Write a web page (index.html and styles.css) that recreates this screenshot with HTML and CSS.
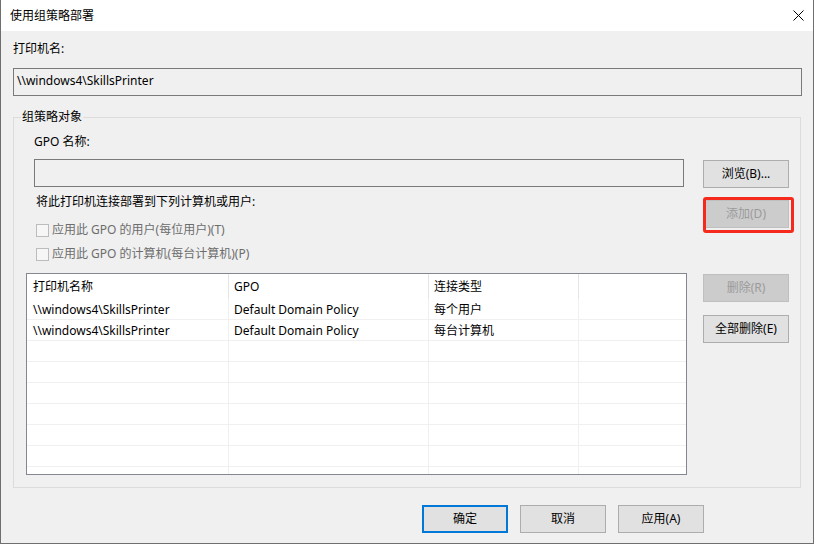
FILE: index.html
```html
<!DOCTYPE html>
<html lang="zh-CN">
<head>
<meta charset="utf-8">
<title>使用组策略部署</title>
<link rel="stylesheet" href="styles.css">
</head>
<body>
<div class="window">
  <div class="titlebar">
    <span class="title">使用组策略部署</span>
    <svg class="close" width="11" height="11" viewBox="0 0 11 11"><path d="M0.5 0.5 L10.5 10.5 M10.5 0.5 L0.5 10.5" stroke="#000" stroke-width="1" fill="none"/></svg>
  </div>
  <div class="content">
    <div class="label">打印机名:</div>
    <div class="textbox printer">\\windows4\SkillsPrinter</div>

    <div class="group">
      <span class="group-title">组策略对象</span>
      <div class="group-top">
        <div class="left">
          <div class="label">GPO 名称:</div>
          <div class="textbox gpo"></div>
          <div class="hint">将此打印机连接部署到下列计算机或用户:</div>
          <div class="check first"><span class="box"></span>应用此 GPO 的用户(每位用户)(T)</div>
          <div class="check"><span class="box"></span>应用此 GPO 的计算机(每台计算机)(P)</div>
        </div>
        <div class="side side-top">
          <div class="btn">浏览(B)...</div>
          <div class="hl-wrap">
            <div class="btn disabled">添加(D)</div>
            <span class="highlight"></span>
          </div>
        </div>
      </div>
      <div class="group-bottom">
        <div class="list">
          <div class="row head">
            <div class="cell c1">打印机名称</div>
            <div class="cell c2">GPO</div>
            <div class="cell c3">连接类型</div>
            <div class="cell c4"></div>
          </div>
          <div class="row">
            <div class="cell c1">\\windows4\SkillsPrinter</div>
            <div class="cell c2">Default Domain Policy</div>
            <div class="cell c3">每个用户</div>
            <div class="cell c4"></div>
          </div>
          <div class="row">
            <div class="cell c1">\\windows4\SkillsPrinter</div>
            <div class="cell c2">Default Domain Policy</div>
            <div class="cell c3">每台计算机</div>
            <div class="cell c4"></div>
          </div>
          <div class="row"><div class="cell c1"></div><div class="cell c2"></div><div class="cell c3"></div><div class="cell c4"></div></div>
          <div class="row"><div class="cell c1"></div><div class="cell c2"></div><div class="cell c3"></div><div class="cell c4"></div></div>
          <div class="row"><div class="cell c1"></div><div class="cell c2"></div><div class="cell c3"></div><div class="cell c4"></div></div>
          <div class="row"><div class="cell c1"></div><div class="cell c2"></div><div class="cell c3"></div><div class="cell c4"></div></div>
          <div class="row"><div class="cell c1"></div><div class="cell c2"></div><div class="cell c3"></div><div class="cell c4"></div></div>
          <div class="row"><div class="cell c1"></div><div class="cell c2"></div><div class="cell c3"></div><div class="cell c4"></div></div>
          <div class="row"><div class="cell c1"></div><div class="cell c2"></div><div class="cell c3"></div><div class="cell c4"></div></div>
        </div>
        <div class="side side-bottom">
          <div class="btn disabled">删除(R)</div>
          <div class="btn del-all">全部删除(E)</div>
        </div>
      </div>
    </div>

    <div class="footer">
      <div class="btn primary">确定</div>
      <div class="btn">取消</div>
      <div class="btn">应用(A)</div>
    </div>
  </div>
</div>
</body>
</html>
```

FILE: styles.css
```css
* { box-sizing: border-box; }

html, body {
  margin: 0;
  padding: 0;
  background: #ffffff;
}

body {
  font-family: "Noto Sans", "Noto Sans CJK SC", sans-serif;
  font-size: 12px;
  color: #000;
}

.window {
  width: 814px;
  height: 544px;
  border: 1px solid #6f6f6f;
  border-top: none;
  background: #f0f0f0;
  display: flex;
  flex-direction: column;
}

.titlebar {
  height: 31px;
  flex: 0 0 31px;
  background: #ffffff;
  display: flex;
  align-items: center;
  justify-content: space-between;
  padding: 0 9px 0 9px;
}

.title {
  line-height: 18px;
}

.close {
  display: block;
  margin-top: -1px;
}

.content {
  padding: 9px 11px 0 12px;
}

.label {
  line-height: 18px;
  height: 18px;
}

.textbox {
  height: 28px;
  border: 1px solid #7a7a7a;
  background: #f0f0f0;
  line-height: 24px;
  padding-left: 3px;
  white-space: nowrap;
}

.printer {
  margin-top: 10px;
}

.group {
  position: relative;
  margin-top: 21px;
  width: 788px;
  border: 1px solid #dcdcdc;
  padding: 15px 11px 12px 12px;
}

.group-title {
  position: absolute;
  top: -10px;
  left: 7px;
  line-height: 18px;
  padding: 0 1px;
  background: #f0f0f0;
}

.group-top {
  display: flex;
  align-items: flex-start;
}

.left {
  margin-left: 8px;
  width: 650px;
  flex: 0 0 650px;
}

.gpo {
  margin-top: 8px;
}

.hint {
  margin-top: 6px;
  margin-left: 2px;
  line-height: 18px;
  height: 18px;
}

.check {
  display: flex;
  align-items: center;
  margin-top: 6px;
  margin-left: 2px;
  height: 18px;
  line-height: 18px;
  color: #6d6d6d;
}

.check.first {
  margin-top: 10px;
}

.box {
  width: 13px;
  height: 13px;
  border: 1px solid #bcbcbc;
  background: #f6f6f6;
  margin-right: 3px;
  flex: 0 0 13px;
}

.side {
  width: 86px;
  flex: 0 0 86px;
  display: flex;
  flex-direction: column;
}

.side-top {
  margin-left: 19px;
  padding-top: 27px;
  gap: 12px;
}

.side-bottom {
  margin-left: 16px;
  padding-top: 1px;
  gap: 13px;
}

.btn {
  width: 86px;
  height: 28px;
  border: 1px solid #adadad;
  background: #e1e1e1;
  display: flex;
  align-items: center;
  justify-content: center;
  line-height: 18px;
  white-space: nowrap;
}

.btn.disabled {
  background: #cccccc;
  border-color: #bfbfbf;
  color: #9b9b9b;
}

.btn.primary {
  border: 2px solid #0078d7;
}

.hl-wrap {
  position: relative;
}

.highlight {
  position: absolute;
  left: 0;
  top: -3px;
  width: 91px;
  height: 36px;
  border: 3px solid #f52a1c;
  border-radius: 3px;
}

.group-bottom {
  display: flex;
  align-items: flex-start;
  margin-top: 10px;
}

.list {
  width: 661px;
  height: 202px;
  flex: 0 0 661px;
  border: 1px solid #828790;
  background: #ffffff;
  overflow: hidden;
}

.row {
  display: flex;
  height: 21px;
  border-bottom: 1px solid #f0f0f0;
}

.row.head {
  height: 25px;
  border-bottom: none;
}

.cell {
  height: 100%;
  line-height: 21px;
  padding-left: 5px;
  white-space: nowrap;
  overflow: hidden;
  border-right: 1px solid #f0f0f0;
}

.head .cell {
  line-height: 25px;
  border-right-color: #e5e5e5;
}

.c1 { width: 202px; flex: 0 0 202px; padding-left: 6px; }
.c2 { width: 200px; flex: 0 0 200px; }
.c3 { width: 150px; flex: 0 0 150px; }
.c4 { flex: 1 1 auto; border-right: none; }
.head .c4 { border-right: none; }

.footer {
  display: flex;
  justify-content: flex-end;
  gap: 12px;
  margin-top: 17px;
  padding-right: 98px;
}
```
